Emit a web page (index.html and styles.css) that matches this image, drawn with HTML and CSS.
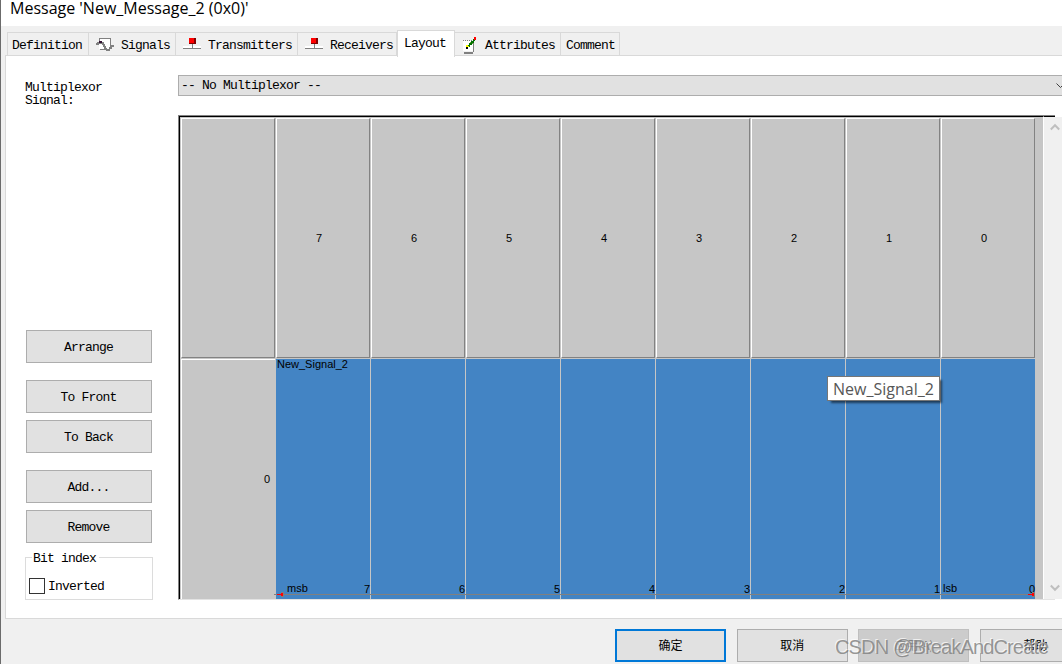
FILE: index.html
```
<!DOCTYPE html>
<html lang="zh">
<head>
    <meta charset="UTF-8">
    <title>Message 'New_Message_2 (0x0)'</title>
    <link rel="stylesheet" href="styles.css">
</head>
<body>
    <div class="dialog">
        <div class="title">Message 'New_Message_2 (0x0)'</div>
        <div class="tabs">
            <div class="tab tab-definition">Definition</div>
            <div class="tab tab-signals">
                <svg width="18" height="14" viewBox="0 0 18 14" shape-rendering="crispEdges">
                    <path d="M3 1h11v10H3z" fill="#fff"/>
                    <path d="M3 0h12v1H3zM3 1h1v3H3zM14 1h1v6h-1zM4 11h6v1H4z" fill="#808080"/>
                    <path d="M0 5h3v2H0zM1 4h5v2H1zM6 4h2v3H6zM7 6h2v3H7zM8 8h2v3H8zM9 10h2v2H9zM10 11h4v2h-4zM13 9h3v2h-3zM14 7h4v2h-4z" fill="#808080"/>
                    <path d="M3 3h3v2H3z" fill="#301030"/>
                </svg>
                <span>Signals</span>
            </div>
            <div class="tab tab-transmitters">
                <svg width="18" height="12" viewBox="0 0 18 12" shape-rendering="crispEdges">
                    <path d="M0 8h18v2H0z" fill="#fff"/>
                    <path d="M0 10h18v1H0zM9 6h1v4H9z" fill="#808080"/>
                    <path d="M6 0h7v6H6z" fill="#800000"/>
                    <path d="M6 0h5v5H6z" fill="#f00"/>
                </svg>
                <span>Transmitters</span>
            </div>
            <div class="tab tab-receivers">
                <svg width="18" height="12" viewBox="0 0 18 12" shape-rendering="crispEdges">
                    <path d="M0 8h18v2H0z" fill="#fff"/>
                    <path d="M0 10h18v1H0zM9 6h1v4H9z" fill="#808080"/>
                    <path d="M6 0h7v6H6z" fill="#800000"/>
                    <path d="M6 0h5v5H6z" fill="#f00"/>
                </svg>
                <span>Receivers</span>
            </div>
            <div class="tab tab-layout active">Layout</div>
            <div class="tab tab-attributes">
                <svg width="14" height="17" viewBox="0 0 14 17" shape-rendering="crispEdges">
                    <path d="M0 4h10v10H0z" fill="#fff"/>
                    <path d="M10 6h1v9h-1zM1 15h9v2H1z" fill="#808080"/>
                    <path d="M0 3.500h9" stroke="#808080" stroke-dasharray="1 1"/>
                    <path d="M10 2h2v2h-1v2h-2v2H7v2H5V8h1V6h2V4h2z" fill="#007000"/>
                    <path d="M7 5h1v1H7zM9 6h1v1H9z" fill="#60a030"/>
                    <path d="M3 8h2v1h1v1H4v1H3z" fill="#ff0"/>
                    <path d="M3 10h2v2H3z" fill="#000"/>
                    <path d="M11 0h2v3h-2z" fill="#f00"/>
                </svg>
                <span>Attributes</span>
            </div>
            <div class="tab tab-comment">Comment</div>
        </div>

        <div class="panel">
            <div class="sidebar">
                <div class="mux-label">Multiplexor<br>Signal:</div>
                <button class="first">Arrange</button>
                <button class="spaced">To Front</button>
                <button>To Back</button>
                <button class="spaced">Add...</button>
                <button>Remove</button>
                <div class="group">
                    <span class="legend">Bit index</span>
                    <label><span class="checkbox"></span>Inverted</label>
                </div>
            </div>

            <div class="main">
                <div class="select">
                    <span>-- No Multiplexor --</span>
                    <svg width="9" height="6" viewBox="0 0 9 6"><path d="M.5.5l4 4 4-4" fill="none" stroke="#404040"/></svg>
                </div>
                <div class="frame">
                    <div class="grid">
                        <div class="head"></div>
                        <div class="head">7</div>
                        <div class="head">6</div>
                        <div class="head">5</div>
                        <div class="head">4</div>
                        <div class="head">3</div>
                        <div class="head">2</div>
                        <div class="head">1</div>
                        <div class="head">0</div>
                        <div class="row-head">0</div>
                        <div class="bit"><span class="name">New_Signal_2</span><span class="msb">msb</span>7</div>
                        <div class="bit">6</div>
                        <div class="bit">5</div>
                        <div class="bit">4</div>
                        <div class="bit">3</div>
                        <div class="bit">2</div>
                        <div class="bit">1</div>
                        <div class="bit"><span class="lsb">lsb</span>0</div>
                        <svg class="range" width="761" height="5" viewBox="0 0 761 5" shape-rendering="crispEdges">
                            <path d="M0 2h760v1H0zM7 0h3v5H7zM758 0h3v5h-3z" fill="#808080"/>
                            <path d="M3 2h5v1H3zM7 1h2v3H7zM754 2h4v1h-4zM758 1h2v3h-2z" fill="#f00"/>
                        </svg>
                        <div class="tooltip">New_Signal_2</div>
                    </div>
                    <div class="scrollbar">
                        <svg width="10" height="8" viewBox="0 0 10 8"><path d="M.8 6.500L5 2.200l4.200 4.300" fill="none" stroke="#bfbfbf" stroke-width="2"/></svg>
                        <svg width="10" height="8" viewBox="0 0 10 8"><path d="M.8 1.500L5 5.800l4.200-4.300" fill="none" stroke="#bfbfbf" stroke-width="2"/></svg>
                    </div>
                </div>
            </div>
        </div>

        <div class="footer">
            <button class="default">确定</button>
            <button>取消</button>
            <button class="disabled" disabled>应用(A)</button>
            <button>帮助</button>
        </div>
        <div class="watermark">CSDN @BreakAndCreate</div>
    </div>
</body>
</html>
```

FILE: styles.css
```
* {
    box-sizing: border-box;
}
body {
    margin: 0;
    width: 1062px;
    height: 664px;
    overflow: hidden;
    background: #f0f0f0;
    color: #000;
    font-family: "Liberation Mono", "Noto Sans CJK SC", monospace;
    font-size: 13px;
    letter-spacing: -0.8px;
}
svg {
    display: block;
    flex: none;
}
.dialog {
    position: relative;
    width: 1062px;
    height: 664px;
    overflow: hidden;
    border-left: 1px solid #6b6b6b;
}
.title {
    height: 26px;
    padding-left: 9px;
    background: #fff;
    font-family: "Open Sans", "Noto Sans", sans-serif;
    font-size: 16px;
    line-height: 16px;
    letter-spacing: 0;
    white-space: nowrap;
}

/* tabs */
.tabs {
    display: flex;
    align-items: flex-end;
    height: 30px;
    padding-left: 6px;
}
.tab {
    display: flex;
    align-items: center;
    height: 24px;
    border: 1px solid #d9d9d9;
    border-left: none;
    border-bottom: none;
    padding-left: 5px;
    white-space: nowrap;
}
.tab:not(.active) {
    padding-top: 1px;
}
.tab-definition {
    width: 82px;
    border-left: 1px solid #d9d9d9;
    padding-left: 4px;
}
.tab-signals {
    width: 87px;
    padding-left: 7px;
    gap: 7px;
}
.tab-transmitters {
    width: 122px;
    padding-left: 7px;
    gap: 7px;
}
.tab-receivers {
    width: 99px;
    padding-left: 7px;
    gap: 7px;
}
.tab-transmitters svg,
.tab-receivers svg {
    margin-bottom: 3px;
}
.tab-attributes {
    width: 106px;
    padding-left: 8px;
    gap: 8px;
}
.tab-comment {
    width: 59px;
}
.tab.active {
    width: 58px;
    height: 27px;
    margin-bottom: -1px;
    padding: 0 0 1px 6px;
    border-left: 1px solid #d9d9d9;
    background: #fff;
    z-index: 1;
}

/* layout page */
.panel {
    display: flex;
    height: 564px;
    margin-left: 4px;
    margin-top: -1px;
    border: 1px solid #d9d9d9;
    border-right: none;
    background: #fff;
}
.sidebar {
    display: flex;
    flex-direction: column;
    flex: none;
    width: 172px;
    padding: 25px 0 0 19px;
}
.mux-label {
    height: 24px;
    line-height: 13px;
    overflow: hidden;
}
button {
    flex: none;
    height: 33px;
    padding: 0;
    border: 1px solid #adadad;
    background: #e1e1e1;
    color: #000;
    font: inherit;
    letter-spacing: inherit;
}
.sidebar button {
    width: 126px;
    margin: 7px 0 0 1px;
    padding: 1px 1px 0 0;
}
.sidebar button.spaced {
    margin-top: 17px;
}
.sidebar button.first {
    margin-top: 225px;
}
.group {
    width: 128px;
    height: 43px;
    margin-top: 14px;
    border: 1px solid #dcdcdc;
}
.legend {
    display: block;
    width: 67px;
    margin: -8px 0 0 6px;
    padding-left: 1px;
    background: #fff;
    line-height: 17px;
}
.group label {
    display: flex;
    align-items: center;
    gap: 3px;
    margin: 11px 0 0 3px;
}
.checkbox {
    width: 16px;
    height: 16px;
    border: 1px solid #333;
}
.main {
    flex: none;
    width: 887px;
    padding-top: 19px;
}
.select {
    display: flex;
    align-items: center;
    justify-content: space-between;
    height: 21px;
    padding: 0 0 0 2px;
    border: 1px solid #adadad;
    border-right: none;
    background: #e1e1e1;
}
.frame {
    display: flex;
    width: 877px;
    height: 485px;
    margin-top: 19px;
    border-top: 1px solid #828282;
    border-left: 1px solid #828282;
    border-bottom: 1px solid #e3e3e3;
    background: linear-gradient(#000 1px, transparent 1px);
}
.grid {
    position: relative;
    display: grid;
    grid-template-columns: repeat(9, 94px);
    grid-template-rows: 240px 240px;
    gap: 1px;
    flex: none;
    width: 865px;
    padding: 1px 0 0 1px;
    border-top: 1px solid #000;
    border-left: 1px solid #000;
    border-right: 1px solid #fff;
    background: #c6c6c6;
    font-family: "Liberation Sans", Arial, sans-serif;
    font-size: 11px;
    letter-spacing: 0;
}
.head {
    display: flex;
    align-items: center;
    justify-content: center;
    padding-right: 8px;
    border: 1px solid #828282;
    border-top-color: #fff;
    border-left-color: #fff;
}
.row-head {
    display: flex;
    align-items: center;
    justify-content: flex-end;
    padding: 0 5px 2px 0;
    border-top: 1px solid #fff;
    border-left: 1px solid #fff;
}
.bit {
    display: flex;
    position: relative;
    align-items: flex-end;
    justify-content: flex-end;
    padding-bottom: 4px;
    background: #4384c4;
}
.name {
    position: absolute;
    top: -1px;
    left: 1px;
}
.msb,
.lsb {
    margin-right: auto;
    padding: 0 0 1px 11px;
}
.lsb {
    padding-left: 2px;
}
.range {
    position: absolute;
    left: 94px;
    bottom: 2px;
}
.tooltip {
    position: absolute;
    left: 647px;
    top: 259px;
    width: 113px;
    height: 25px;
    padding-left: 5px;
    border: 1px solid #767676;
    background: #fff;
    box-shadow: 3px 3px 2px -1px rgba(0, 0, 0, 0.55);
    color: #575757;
    font-family: "Open Sans", "Noto Sans", sans-serif;
    font-size: 16px;
    line-height: 24px;
}
.scrollbar {
    display: flex;
    flex-direction: column;
    align-items: center;
    justify-content: space-between;
    flex: none;
    width: 22px;
    margin-top: 1px;
    padding: 6px 1px 7px 0;
    background: #f0f0f0;
}

/* bottom buttons */
.footer {
    display: flex;
    gap: 10.700px;
    padding: 10px 0 0 614px;
    font-family: "Noto Sans CJK SC", sans-serif;
    font-size: 12px;
    letter-spacing: 0;
}
.footer button {
    width: 111px;
    padding-bottom: 2px;
}
.footer .default {
    border: 2px solid #0078d7;
}
.footer .disabled {
    border-color: #bfbfbf;
    background: #ccc;
    color: #838383;
}
.watermark {
    position: absolute;
    left: 834px;
    top: 635px;
    color: rgba(125, 125, 125, 0.8);
    font-family: "Liberation Sans", Arial, sans-serif;
    font-size: 20px;
    line-height: 24px;
    letter-spacing: -0.85px;
    text-shadow: -1px -1px 0 rgba(255, 255, 255, 0.7);
    white-space: nowrap;
}
```
